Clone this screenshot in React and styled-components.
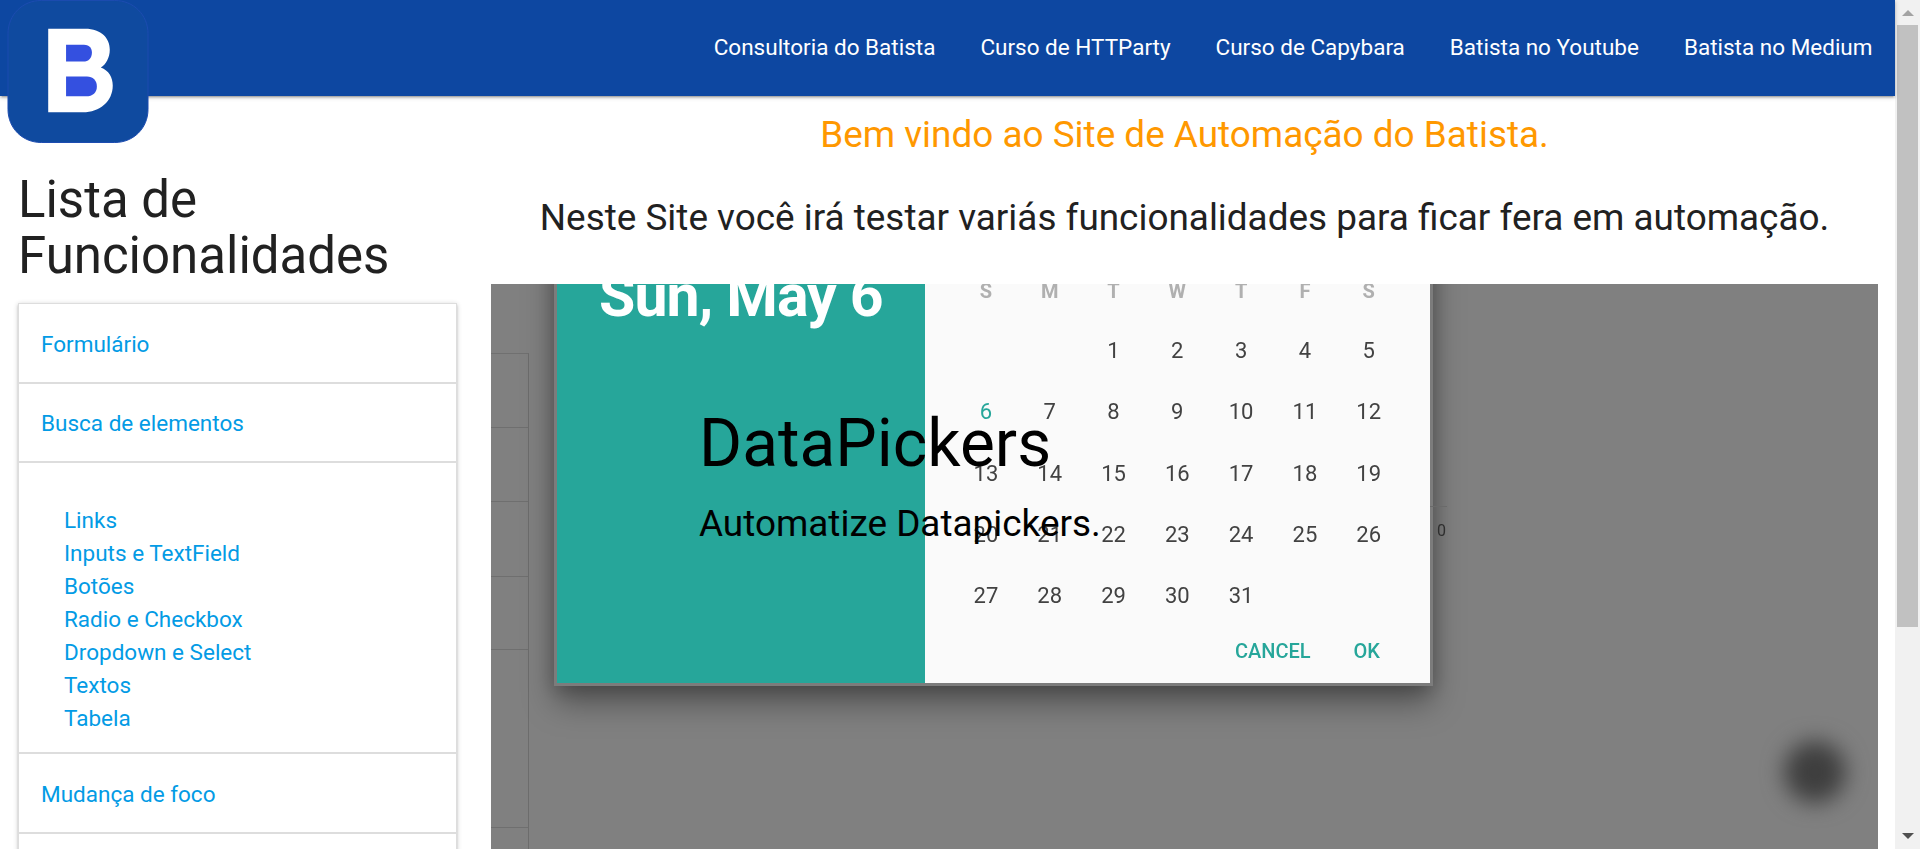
import React from "react";
import styled, { createGlobalStyle } from "styled-components";

const Global = createGlobalStyle`
  html, body { margin: 0; padding: 0; height: 100%; overflow: hidden; background: #fff; }
  body { font-family: Roboto, "Liberation Sans", sans-serif; color: rgba(0,0,0,0.87); }
  * { box-sizing: border-box; }
`;
const Shell = styled.div`
  display: flex;
  height: 100vh;
  overflow: hidden;
`;
const Page = styled.div`
  flex: 1;
  min-width: 0;
  display: flex;
  flex-direction: column;
  position: relative;
`;
const Nav = styled.nav`
  height: 96px;
  flex: none;
  padding-bottom: 2px;
  background: #0d47a1;
  display: flex;
  justify-content: flex-end;
  align-items: center;
  box-shadow: 0 2px 2px 0 rgba(0,0,0,0.14), 0 3px 1px -2px rgba(0,0,0,0.12), 0 1px 5px 0 rgba(0,0,0,0.2);
  position: relative;
  z-index: 2;
`;
const NavLink = styled.a`
  color: #fff;
  font-size: 22.5px;
  padding: 0 22.5px;
  white-space: nowrap;
`;
const Logo = styled.svg`
  position: absolute;
  left: 7px;
  top: 0;
  width: 142px;
  height: 143px;
  z-index: 3;
`;
const Columns = styled.div`
  flex: 1;
  min-height: 0;
  display: flex;
`;
const Sidebar = styled.aside`
  width: 491px;
  flex: none;
  padding: 76px 34px 0 18px;
`;
const SideTitle = styled.h3`
  margin: 0 0 19px;
  font-size: 51px;
  font-weight: 400;
  line-height: 56px;
  color: #212121;
`;
const Collapsible = styled.ul`
  list-style: none;
  margin: 0;
  padding: 0;
  border: 1px solid #ddd;
  border-bottom: 0;
  box-shadow: 0 2px 2px 0 rgba(0,0,0,0.14), 0 3px 1px -2px rgba(0,0,0,0.12), 0 1px 5px 0 rgba(0,0,0,0.2);
`;
const Item = styled.a`
  display: block;
  padding: 23.5px 22px 21px;
  font-size: 22.5px;
  line-height: 33px;
  color: #039be5;
  border-bottom: 2px solid #ddd;
`;
const SubList = styled.ul`
  list-style: none;
  margin: 0;
  padding: 40.5px 20px 17.5px 45px;
  border-bottom: 2px solid #ddd;
`;
const SubItem = styled.li`
  font-size: 22.5px;
  line-height: 33px;
  color: #039be5;
`;
const Content = styled.main`
  flex: 1;
  min-width: 0;
  display: flex;
  flex-direction: column;
  padding-right: 17px;
`;
const Welcome = styled.h4`
  margin: 0;
  height: 79px;
  padding-top: 19px;
  text-align: center;
  font-size: 36.9px;
  line-height: 40px;
  font-weight: 400;
  color: #ff9800;
`;
const Intro = styled.h4`
  margin: 0;
  height: 109px;
  padding-top: 23px;
  text-align: center;
  font-size: 36.9px;
  line-height: 40px;
  font-weight: 400;
  color: #212121;
`;
const Slide = styled.section`
  flex: 1;
  min-height: 0;
  position: relative;
  overflow: hidden;
  background: #808080;
`;
const Shot = styled.div`
  height: 100%;
  padding-left: 66px;
  filter: blur(0.6px);
`;
const GridLines = styled.div`
  position: absolute;
  left: 0;
  top: 69px;
  width: 38px;
  height: 500px;
  border-right: 1px solid #6c6c6c;
  border-top: 1px solid #707070;
  background:
    linear-gradient(#6f6f6f, #6f6f6f) 0 73px / 100% 1px no-repeat,
    linear-gradient(#6f6f6f, #6f6f6f) 0 147px / 100% 1px no-repeat,
    linear-gradient(#6f6f6f, #6f6f6f) 0 222px / 100% 1px no-repeat,
    linear-gradient(#6f6f6f, #6f6f6f) 0 295px / 100% 1px no-repeat,
    linear-gradient(#6f6f6f, #6f6f6f) 0 473px / 100% 1px no-repeat;
`;
const Dialog = styled.div`
  width: 873px;
  height: 479px;
  margin-top: -80px;
  display: flex;
  position: relative;
  box-shadow: 0 0 0 3px #7c7c7c, 0 18px 30px 2px rgba(0,0,0,0.36), 0 4px 18px 3px rgba(0,0,0,0.2);
`;
const DateSide = styled.div`
  width: 368px;
  flex: none;
  background: #26a69a;
`;
const DateLabel = styled.div`
  margin: 62px 0 0 42px;
  color: #fff;
  font-size: 59px;
  line-height: 60px;
  font-weight: 700;
  letter-spacing: -0.9px;
  white-space: nowrap;
`;
const CalSide = styled.div`
  flex: 1;
  background: #fafafa;
  padding: 75px 28px 0 29px;
  color: #424242;
`;
const Weekdays = styled.div`
  display: grid;
  grid-template-columns: repeat(7, 63.8px);
  height: 57px;
  font-size: 20px;
  font-weight: 700;
  color: #b0b0b0;
  justify-items: center;
`;
const Days = styled.div`
  display: grid;
  grid-template-columns: repeat(7, 63.8px);
  grid-auto-rows: 61.3px;
  align-items: start;
  justify-items: center;
  font-size: 22px;
  line-height: 30px;
`;
const Day = styled.span`
  color: ${(p) => (p.$today ? "#26a69a" : "inherit")};
`;
const Actions = styled.div`
  display: flex;
  justify-content: flex-end;
  gap: 43px;
  padding: 0 22px;
  margin-top: -3px;
  color: #26a69a;
  font-size: 20px;
  font-weight: 500;
`;
const AxisStub = styled.div`
  position: absolute;
  left: 939px;
  top: 222px;
  width: 17px;
  border-top: 1px solid #6a6a6a;
  font-size: 16px;
  color: #2e2e2e;
  text-align: right;
  padding: 14px 1px 0 0;
  filter: blur(0.4px);
`;
const Fab = styled.div`
  position: absolute;
  left: 1293px;
  top: 457px;
  width: 62px;
  height: 62px;
  border-radius: 50%;
  background: #3e3e3e;
  filter: blur(11px);
`;
const Caption = styled.div`
  position: absolute;
  left: 208px;
  top: 125px;
  color: #000;
`;
const CaptionTitle = styled.h3`
  margin: 0;
  font-size: 65.8px;
  line-height: 69px;
  font-weight: 400;
`;
const CaptionText = styled.h5`
  margin: 23px 0 0;
  font-size: 36.9px;
  line-height: 46px;
  font-weight: 400;
  white-space: nowrap;
`;
const Scrollbar = styled.div`
  width: 25px;
  flex: none;
  background: #f1f1f1;
  display: flex;
  flex-direction: column;
  align-items: center;
  position: relative;
`;
const ArrowUp = styled.div`
  margin-top: 10px;
  width: 0;
  height: 0;
  border-left: 6px solid transparent;
  border-right: 6px solid transparent;
  border-bottom: 6px solid #a3a3a3;
`;
const Thumb = styled.div`
  width: 21px;
  height: 602px;
  margin-top: 9px;
  background: #c1c1c1;
`;
const ArrowDown = styled.div`
  margin-top: auto;
  margin-bottom: 10px;
  width: 0;
  height: 0;
  border-left: 6px solid transparent;
  border-right: 6px solid transparent;
  border-top: 6px solid #505050;
`;

const LINKS = ["Consultoria do Batista", "Curso de HTTParty", "Curso de Capybara", "Batista no Youtube", "Batista no Medium"];
const SUBS = ["Links", "Inputs e TextField", "Botões", "Radio e Checkbox", "Dropdown e Select", "Textos", "Tabela"];
const WEEK = ["S", "M", "T", "W", "T", "F", "S"];
const DAYS = [null, null, 1, 2, 3, 4, 5, 6, 7, 8, 9, 10, 11, 12, 13, 14, 15, 16, 17, 18, 19, 20, 21, 22, 23, 24, 25, 26, 27, 28, 29, 30, 31];

export default function App() {
  return (
    <Shell>
      <Global />
      <Page>
        <Nav>
          {LINKS.map((l) => <NavLink key={l}>{l}</NavLink>)}
        </Nav>
        <Logo viewBox="0 0 142 144">
          <path d="M34 .5H108C127 .5 141.500 15 141.500 34V110C141.500 129 127 143.500 108 143.500H34C15 143.500 .5 129 .5 110V34C.5 15 15 .5 34 .5Z" fill="#0f4a9f" stroke="#1c4cb0" />
          <path d="M41 29H78C95 29 103 39 103 50C103 58 99 65 94 68C102 71 106 78 106 86C106 102 93 113 76 113H41Z" fill="#fff" />
          <path d="M59 45H77C83 45 85 49 85 53C85 58 82 62 76 62H59Z" fill="#3450e0" />
          <path d="M59 77H80C86 77 90 81 90 87C90 93 86 97 79 97H59Z" fill="#3450e0" />
        </Logo>
        <Columns>
          <Sidebar>
            <SideTitle>Lista de Funcionalidades</SideTitle>
            <Collapsible>
              <li><Item>Formulário</Item></li>
              <li>
                <Item>Busca de elementos</Item>
                <SubList>
                  {SUBS.map((s) => <SubItem key={s}>{s}</SubItem>)}
                </SubList>
              </li>
              <li><Item>Mudança de foco</Item></li>
              <li><Item>&nbsp;</Item></li>
            </Collapsible>
          </Sidebar>
          <Content>
            <Welcome>Bem vindo ao Site de Automação do Batista.</Welcome>
            <Intro>Neste Site você irá testar variás funcionalidades para ficar fera em automação.</Intro>
            <Slide>
              <GridLines />
              <Shot>
                <Dialog>
                  <DateSide>
                    <DateLabel>Sun, May 6</DateLabel>
                  </DateSide>
                  <CalSide>
                    <Weekdays>
                      {WEEK.map((d, i) => <span key={i}>{d}</span>)}
                    </Weekdays>
                    <Days>
                      {DAYS.map((d, i) => <Day key={i} $today={d === 6}>{d}</Day>)}
                    </Days>
                    <Actions>
                      <span>CANCEL</span>
                      <span>OK</span>
                    </Actions>
                  </CalSide>
                </Dialog>
              </Shot>
              <AxisStub>0</AxisStub>
              <Fab />
              <Caption>
                <CaptionTitle>DataPickers</CaptionTitle>
                <CaptionText>Automatize Datapickers.</CaptionText>
              </Caption>
            </Slide>
          </Content>
        </Columns>
      </Page>
      <Scrollbar>
        <ArrowUp />
        <Thumb />
        <ArrowDown />
      </Scrollbar>
    </Shell>
  );
}
